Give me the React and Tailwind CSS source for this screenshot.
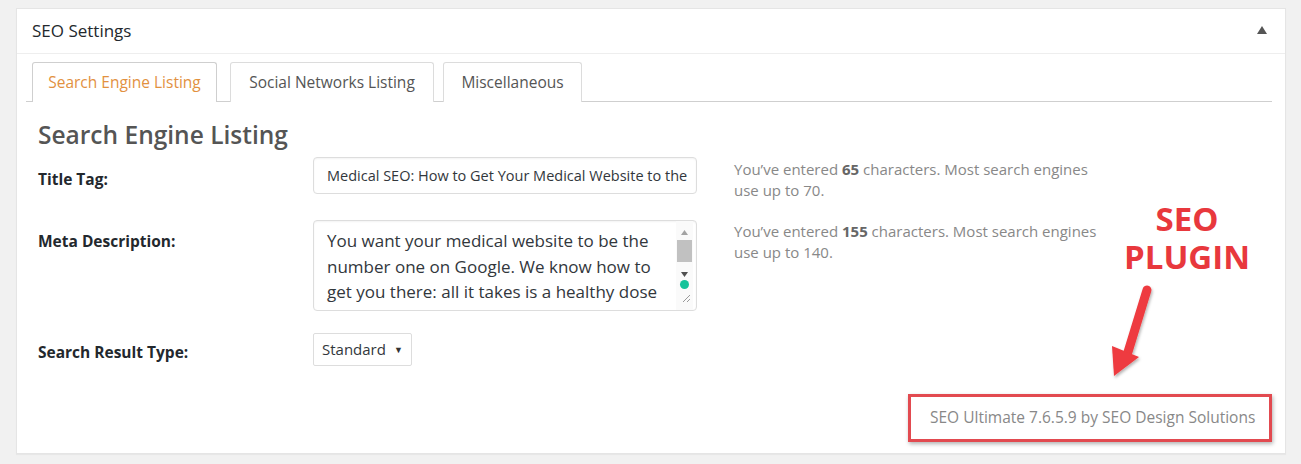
import React from 'react'

const ui = { fontFamily: '"Open Sans", "Noto Sans", Arial, sans-serif' }

function Tab({ label, active, width, className = '' }) {
  return (
    <div
      className={`-mb-px h-[40px] flex items-center justify-center border border-b-0 rounded-t-[3px] text-[15.5px] ${width} ${className} ${
        active ? 'bg-white border-[#cfcfcf] text-[#e2913f]' : 'bg-white border-[#dcdcdc] text-[#555] border-b border-b-[#cfcfcf]'
      }`}
    >
      {label}
    </div>
  )
}

function HelpText({ count, limit }) {
  return (
    <p className="w-[372px] text-[15px] leading-[21px] text-[#888]">
      You’ve entered <b className="font-bold text-[#666]">{count}</b> characters. Most search engines use up to {limit}.
    </p>
  )
}

export default function App() {
  const descLines = [
    'You want your medical website to be the',
    'number one on Google. We know how to',
    'get you there: all it takes is a healthy dose',
    'of medical SEO. Learn how and why.',
  ]

  return (
    <div className="w-[1301px] h-[464px] bg-[#f1f1f1] pt-[8px] pl-[16px] pr-[15px] overflow-hidden" style={ui}>
      <div className="relative h-[446px] bg-white border border-[#e5e5e5] shadow-[0_1px_1px_rgba(0,0,0,0.04)]">
        {/* header */}
        <div className="h-[45px] flex items-center justify-between pl-[15px] pr-[18px] border-b border-[#eeeeee]">
          <h2 className="text-[17px] font-normal text-[#23282d]">SEO Settings</h2>
          <svg width="10" height="8" viewBox="0 0 10 8" className="mb-[2px]">
            <path d="M5 0 L10 8 L0 8 Z" fill="#555" />
          </svg>
        </div>

        {/* tabs */}
        <div className="mt-[8px] ml-[9px] mr-[13px] flex items-end border-b border-[#cfcfcf] pl-[6px]">
          <Tab label="Search Engine Listing" active width="w-[185px]" />
          <Tab label="Social Networks Listing" width="w-[204px]" className="ml-[13px]" />
          <Tab label="Miscellaneous" width="w-[139px]" className="ml-[9px]" />
        </div>

        <div className="pl-[21px]">
          <h3 className="mt-[17px] text-[24.5px] leading-[32px] font-semibold text-[#555]">Search Engine Listing</h3>

          {/* title tag */}
          <div className="mt-[6px] h-[37px] flex items-start">
            <label className="w-[275px] pt-[12px] text-[15.5px] leading-[20px] font-bold text-[#23282d]">Title Tag:</label>
            <div className="w-[384px] h-[37px] flex items-center pl-[13px] border border-[#dddddd] rounded-[4px] shadow-[inset_0_1px_2px_rgba(0,0,0,0.05)] text-[14.5px] text-[#32373c] whitespace-nowrap overflow-hidden">
              Medical SEO: How to Get Your Medical Website to the
            </div>
            <div className="ml-[37px] pt-[2px]">
              <HelpText count="65" limit="70" />
            </div>
          </div>

          {/* meta description */}
          <div className="mt-[26px] h-[91px] flex items-start">
            <label className="w-[275px] pt-[11px] text-[15.5px] leading-[20px] font-bold text-[#23282d]">Meta Description:</label>
            <div className="w-[384px] h-[91px] flex border border-[#dddddd] rounded-[4px] shadow-[inset_0_1px_2px_rgba(0,0,0,0.05)] overflow-hidden">
              <div className="flex-1 pl-[13px] pt-[7px] text-[17px] leading-[25.5px] text-[#32373c] whitespace-nowrap overflow-hidden">
                {descLines.map((l) => (
                  <div key={l}>{l}</div>
                ))}
              </div>
              <div className="w-[17px] mr-[3px] flex flex-col items-center bg-[#fafafa]">
                <svg width="7" height="5" viewBox="0 0 7 5" className="mt-[9px]">
                  <path d="M3.5 0 L7 5 L0 5 Z" fill="#a3a3a3" />
                </svg>
                <div className="mt-[5px] w-[15px] h-[22px] bg-[#c1c1c1]" />
                <svg width="7" height="5" viewBox="0 0 7 5" className="mt-[10px]">
                  <path d="M0 0 L7 0 L3.5 5 Z" fill="#505050" />
                </svg>
                <div className="mt-[3px] w-[9px] h-[9px] rounded-full bg-[#15c39a]" />
                <svg width="9" height="9" viewBox="0 0 9 9" className="mt-[5px] ml-[4px]">
                  <path d="M1 8 L8 1 M5 8 L8 5" stroke="#999" strokeWidth="1" />
                </svg>
              </div>
            </div>
            <div className="ml-[37px] pt-[1px]">
              <HelpText count="155" limit="140" />
            </div>
          </div>

          {/* search result type */}
          <div className="mt-[22px] h-[33px] flex items-start">
            <label className="w-[275px] pt-[9px] text-[15.5px] leading-[20px] font-bold text-[#23282d]">Search Result Type:</label>
            <div className="w-[99px] h-[33px] flex items-center justify-between pl-[8px] pr-[8px] border border-[#dddddd] rounded-[2px] text-[15px] text-[#32373c]">
              <span>Standard</span>
              <span className="text-[9px] text-[#333]">▼</span>
            </div>
          </div>

          {/* footer credit */}
          <div className="mt-[28px] flex justify-end mr-[13px]">
            <div className="w-[364px] h-[48px] flex items-center pl-[19px] border-[3px] border-[#e24a50] shadow-[1px_2px_4px_rgba(0,0,0,0.3)] text-[15.5px] text-[#888] whitespace-nowrap">
              SEO Ultimate 7.6.5.9 by SEO Design Solutions
            </div>
          </div>
        </div>

        {/* annotation */}
        <div className="absolute left-[1090px] top-[191px] w-[160px] text-center text-[33px] leading-[38px] font-bold text-[#e8383d]">
          <div>SEO</div>
          <div>PLUGIN</div>
        </div>
        <svg className="absolute left-[1069px] top-[266px]" width="80" height="115" viewBox="0 0 80 115">
          <defs>
            <filter id="sh" x="-30%" y="-30%" width="160%" height="160%">
              <feDropShadow dx="1" dy="2" stdDeviation="1.5" floodColor="#000" floodOpacity="0.3" />
            </filter>
          </defs>
          <g filter="url(#sh)">
            <line x1="61" y1="15" x2="42" y2="77" stroke="#ee3b3f" strokeWidth="9" strokeLinecap="round" />
            <path d="M26 71 L53 82 L28 101 Z" fill="#ee3b3f" />
          </g>
        </svg>
      </div>
    </div>
  )
}
